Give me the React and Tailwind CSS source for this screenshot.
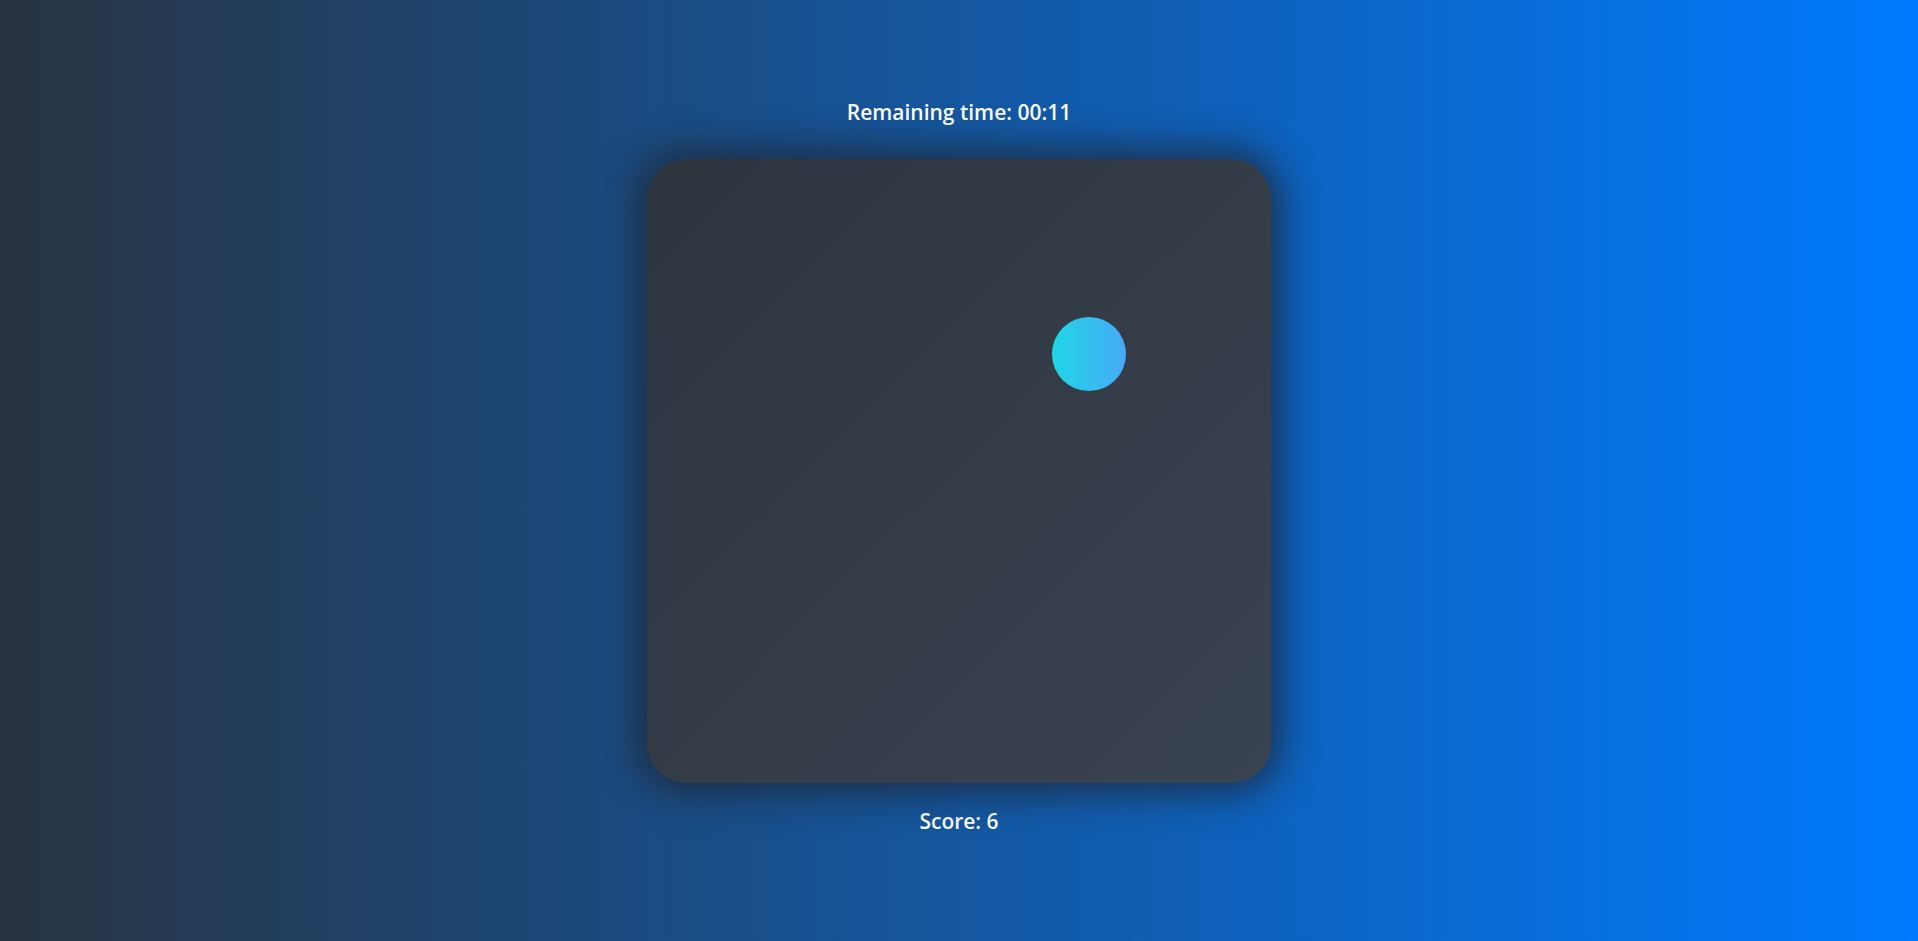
export default function App() {
    return (
        <div
            className="min-h-screen w-full bg-[linear-gradient(to_right,#283341,#007bff)] flex flex-col items-center font-['Open_Sans',sans-serif] text-white">
            <div className="mt-[98px] text-[21px] leading-[29px] font-semibold">Remaining time: 00:11</div>
            <div
                className="relative mt-[32px] w-[624px] h-[624px] rounded-[40px] bg-[linear-gradient(135deg,#2c343e,#3a4350)] shadow-[0_0_35px_12px_rgba(30,35,45,0.7)]">
                <div
                    className="absolute left-[405px] top-[158px] w-[74px] h-[74px] rounded-full bg-[linear-gradient(to_right,#1ed6e6,#48a9f6)]"/>
            </div>
            <div className="mt-[24px] text-[21px] leading-[29px] font-semibold">Score: 6</div>
        </div>
    )
}
